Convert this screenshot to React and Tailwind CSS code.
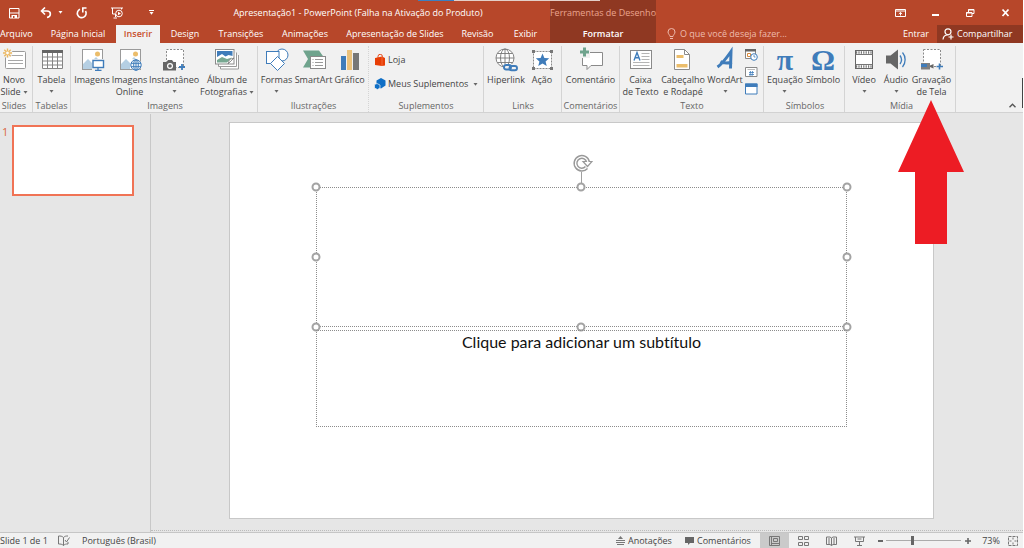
import { useState } from 'react';

const GRAY = '#7f7f7f';
const BLUE = '#3f7cba';

const TABS = [
    { label: 'Arquivo', width: 'w-[40px] justify-start' },
    { label: 'Página Inicial', width: 'w-[76px] justify-center' },
    { label: 'Inserir', width: 'w-[44px] justify-center' },
    { label: 'Design', width: 'w-[50px] justify-center' },
    { label: 'Transições', width: 'w-[62px] justify-center' },
    { label: 'Animações', width: 'w-[66px] justify-center' },
    { label: 'Apresentação de Slides', width: 'w-[114px] justify-center' },
    { label: 'Revisão', width: 'w-[51px] justify-center' },
    { label: 'Exibir', width: 'w-[45px] justify-center' }
];

const HANDLES = [
    'left-0 top-0',
    'left-1/2 top-0',
    'left-full top-0',
    'left-0 top-1/2',
    'left-full top-1/2',
    'left-0 top-full',
    'left-1/2 top-full',
    'left-full top-full'
];

function Icon({ children }) {
    return (
        <svg viewBox="0 0 24 22" className="w-6 h-[22px] shrink-0 overflow-visible" fill="none" aria-hidden="true">
            {children}
        </svg>
    );
}

function Caret({ className = '' }) {
    return (
        <svg viewBox="0 0 5 3" className={`w-[5px] h-[3px] shrink-0 ${className}`} aria-hidden="true">
            <path d="M.5 0h4L2.5 2.8z" fill="currentColor" />
        </svg>
    );
}

/* Ribbon icons */

function NewSlideIcon() {
    return (
        <Icon>
            <rect x="3.5" y="2.5" width="20" height="17" rx="1" fill="#fff" stroke="#9a9a9a" />
            <path d="M9 6.5h12M6 11.5h15M6 14.5h15" stroke="#a8a8a8" />
            <circle cx="5.5" cy="4" r="5" fill="#f1f1f1" />
            <path d="M5.5 -0.5v9M1 4h9M2.3 .8l6.4 6.4M8.7 .8L2.3 7.2" stroke="#ecb860" strokeWidth="1.4" />
            <circle cx="5.5" cy="4" r="1.4" fill="#fff" />
        </Icon>
    );
}

function TableIcon() {
    return (
        <Icon>
            <rect x="2" y="1" width="21" height="19" fill="#fff" />
            <path d="M2 1h21v3H2z" fill="#666" />
            <path d="M2.5 4v15.5h20V4M2.5 8h20M2.5 12h20M2.5 16h20M7.5 4v15.5M12.5 4v15.5M17.5 4v15.5" stroke="#858585" />
        </Icon>
    );
}

function PhotoBase() {
    return (
        <>
            <rect x="2.5" y=".5" width="20" height="20" fill="#fff" stroke="#9a9a9a" />
            <circle cx="17.5" cy="5" r="2.5" fill="#ebbd6b" />
            <path d="M3 20v-5l5-5 4 4v6zM14 10l2-2 3 3z" fill="#b5cfe3" />
        </>
    );
}

function PicturesIcon() {
    return (
        <Icon>
            <PhotoBase />
            <rect x="12" y="10" width="12" height="12" fill="#f1f1f1" />
            <rect x="13" y="11.5" width="10.5" height="7" fill="#fff" stroke={BLUE} strokeWidth="1.4" />
            <path d="M18 19v2M15 21.3h6.5" stroke={BLUE} strokeWidth="1.3" />
        </Icon>
    );
}

function OnlinePicturesIcon() {
    return (
        <Icon>
            <PhotoBase />
            <circle cx="18" cy="16" r="5.8" fill="#f4f8fb" />
            <g stroke={BLUE}>
                <circle cx="18" cy="16" r="5.2" />
                <ellipse cx="18" cy="16" rx="2.3" ry="5.2" />
                <path d="M13 14.3h10M13 17.7h10M18 11v10" />
            </g>
        </Icon>
    );
}

function ScreenshotIcon() {
    return (
        <Icon>
            <rect x="4.5" y=".5" width="17" height="18" fill="#fff" stroke="#8a8a8a" strokeDasharray="2 1.5" />
            <path d="M1 13h3.5l1.500-2h4l1.500 2H14v8.500H1z" fill="#666" />
            <circle cx="8" cy="17" r="3" fill="#fff" />
            <circle cx="8" cy="17" r="1.8" fill="#666" />
            <path d="M20 15v6M17 18h6" stroke={BLUE} strokeWidth="1.8" />
        </Icon>
    );
}

function AlbumIcon() {
    return (
        <Icon>
            <path d="M5.500 16v4h18V6" fill="#fff" stroke="#9a9a9a" />
            <path d="M3.500 14v3.500h18V3.500" fill="#fff" stroke="#9a9a9a" />
            <rect x=".5" y=".5" width="18.5" height="14.5" fill="#fff" stroke="#8a8a8a" />
            <path d="M2 2h15.500v5l-4-1-3 1.500L7 5 2 8z" fill={BLUE} />
            <path d="M2 11l5-3 5 2 5-1.500-5 5H2z" fill="#78a892" />
            <path d="M13 15l1.500-4.500L19 9z" fill="#fff" stroke="#777" strokeWidth=".8" />
        </Icon>
    );
}

function ShapesIcon() {
    return (
        <Icon>
            <circle cx="17" cy="6" r="6" fill="#fff" stroke={BLUE} />
            <rect x="1.5" y="2.5" width="12.5" height="12" fill="#fff" stroke={BLUE} />
            <path d="M12.5 7.5l7 7-7 7-7-7z" fill="#fff" stroke={BLUE} />
        </Icon>
    );
}

function SmartArtIcon() {
    return (
        <Icon>
            <path d="M1 1.500h16l5 7H17l-7 10H1L6 10z" fill="#6fa38d" />
            <rect x="8.5" y="7.5" width="15" height="12" fill="#fff" stroke="#8a8a8a" />
            <path d="M13 10.500h8M13 13.500h8M13 16.500h8M10.500 10.500h1M10.500 13.500h1M10.500 16.500h1" stroke="#999" />
        </Icon>
    );
}

function ChartIcon() {
    return (
        <Icon>
            <path d="M3 7h5v14H3z" fill={BLUE} />
            <path d="M9 1h5v20H9z" fill="#ebc27c" />
            <path d="M15 4h6v17h-6z" fill="#777" />
        </Icon>
    );
}

function LinkIcon() {
    return (
        <Icon>
            <g stroke="#777" strokeWidth=".9">
                <circle cx="11" cy="9" r="9" fill="#fff" />
                <ellipse cx="11" cy="9" rx="4.5" ry="9" />
                <path d="M2 9h18M3.500 4.500h15M3.500 13.500h15M11 0v18" />
            </g>
            <path d="M10 15h14v7H10z" fill="#f1f1f1" />
            <g stroke={BLUE} strokeWidth="1.9">
                <rect x="10" y="16" width="7" height="4.5" rx="2.2" />
                <rect x="15.5" y="17" width="7.5" height="4.3" rx="2.1" />
            </g>
        </Icon>
    );
}

function ActionIcon() {
    return (
        <Icon>
            <rect x="3.5" y="2.5" width="18" height="17" fill="#fff" stroke="#8a8a8a" strokeDasharray="2 1" />
            <path d="M2 1h3v3H2zM20 1h3v3h-3zM2 18h3v3H2zM20 18h3v3h-3z" fill="#777" />
            <path d="M12.500 4.500l1.900 4.400 4.800.4-3.600 3.100 1.100 4.700-4.200-2.500-4.200 2.500 1.100-4.700-3.600-3.100 4.800-.4z" fill={BLUE} />
        </Icon>
    );
}

function CommentIcon() {
    return (
        <Icon>
            <path d="M3.500 3.500h20v13H12l-4 4v-4H3.500z" fill="#fff" stroke="#8a8a8a" />
            <path d="M1 0h10v9H1z" fill="#f1f1f1" />
            <path d="M5.500 -1.500v9M1 3h9" stroke="#6fa38d" strokeWidth="3" />
        </Icon>
    );
}

function TextBoxIcon() {
    return (
        <Icon>
            <rect x="1.5" y="1.5" width="21" height="18" fill="#fff" stroke="#8a8a8a" />
            <path d="M5 11.500l3-8 3 8M6 8.800h4" stroke={BLUE} strokeWidth="1.4" />
            <path d="M12.500 4.500h8M12.500 7.500h8M12.500 10.500h8M4 13.500h16.500M4 16.500h16.500" stroke="#b5b5b5" />
        </Icon>
    );
}

function HeaderFooterIcon() {
    return (
        <Icon>
            <path d="M3.500 .5h10l5 5v15h-15z" fill="#fff" stroke="#8a8a8a" />
            <path d="M13.500 .5v5h5" stroke="#8a8a8a" />
            <path d="M5.500 6h7v3h-7zM5.500 15h11v3.500h-11z" fill="#ebbd6b" />
        </Icon>
    );
}

function WordArtIcon() {
    return (
        <Icon>
            <path d="M4.500 18C9 15 13.500 9 18 2.500L17.500 19.500M7.500 12.500C11 14.500 14.500 14.500 19 13" stroke={BLUE} strokeWidth="3" />
        </Icon>
    );
}

function SymbolIcon({ children }) {
    return (
        <span className="h-[22px] flex items-center justify-center font-['Liberation_Serif',serif] text-[30px] leading-[18px] font-bold text-[#3f7cba]">
            {children}
        </span>
    );
}

function VideoIcon() {
    return (
        <Icon>
            <rect x="3.5" y="1.5" width="17" height="18" fill="#fff" stroke="#666" />
            <path d="M3.500 5.500h17M3.500 15.500h17" stroke="#777" />
            <path d="M4 3.500h16M4 17.500h16" stroke="#777" strokeWidth="2.5" strokeDasharray="1.2 1.2" />
        </Icon>
    );
}

function AudioIcon() {
    return (
        <Icon>
            <path d="M2 6.500h4.500L14 .5v20l-7.500-6H2z" fill="#666" />
            <path d="M16 6.500c1.800 2.500 1.800 6 0 8.500M18.500 3.500c3.500 4 3.500 10.500 0 14.500" stroke={BLUE} strokeWidth="1.3" />
        </Icon>
    );
}

function RecordIcon() {
    return (
        <Icon>
            <rect x="3.5" y=".5" width="17" height="17" fill="#fff" stroke="#8a8a8a" strokeDasharray="2 1.5" />
            <path d="M1 14h9v6.500H1z" fill={GRAY} />
            <path d="M1 15h6v3H1z" fill={BLUE} />
            <path d="M10 16.500l3.500-1.500v4.500L10 18z" fill="#666" />
            <path d="M19.500 14.500v6M16.500 17.500h6.500" stroke={BLUE} strokeWidth="1.6" />
        </Icon>
    );
}

/* Ribbon building blocks */

function RibbonGroup({ label, className = '', children }) {
    return (
        <section className={`flex flex-col justify-between border-r border-[#d4d4d4] shrink-0 ${className}`}>
            <div className="flex">{children}</div>
            <h2 className="text-center text-[9px] leading-[12px] text-[#666] whitespace-nowrap">{label}</h2>
        </section>
    );
}

function RibbonButton({ icon, lines, caret, className = '' }) {
    return (
        <button type="button" className={`flex flex-col items-center shrink-0 text-[#444] ${className}`}>
            {icon}
            <span className="mt-[3px] flex flex-col items-center text-[9px] leading-[12px] whitespace-nowrap">
                {lines.map((line, i) => (
                    <span key={line} className="flex items-center gap-[2px]">
                        {line}
                        {caret && i === 1 && <Caret className="text-[#666]" />}
                    </span>
                ))}
                {caret && lines.length === 1 && <Caret className="mt-1 text-[#666]" />}
            </span>
        </button>
    );
}

function Header({ activeTab, onTabChange }) {
    return (
        <header className="relative flex h-[43px] bg-[#b7472a] text-white text-[9px]">
            <div className="absolute top-0 left-[418px] flex h-px">
                <span className="w-9 bg-[#3c7fc0]" />
                <span className="w-[146px] bg-[#e3cfc8]" />
            </div>

            <div className="w-[550px] shrink-0 flex flex-col">
                <div className="h-[25px] flex items-center">
                    <div className="flex items-center w-[166px] pl-2 shrink-0">
                        <button type="button" aria-label="Salvar">
                            <svg viewBox="0 0 12 12" className="size-3" fill="none">
                                <path d="M1.500 1.500h9.500v9.500H1.500z" stroke="#fff" />
                                <path d="M1.500 6h9.500" stroke="#fff" />
                                <path d="M3.500 8h5.500v3H3.500z" fill="#fff" />
                                <path d="M5 9h1.500v2H5z" fill="#b7472a" />
                            </svg>
                        </button>
                        <button type="button" aria-label="Desfazer" className="ml-5 flex items-center gap-[6px]">
                            <svg viewBox="0 0 12 12" className="size-3" fill="none">
                                <path d="M5 .5L1.500 4 5 7.500M2 4h5c4.500 0 4.500 5.500 0 6.500" stroke="#fff" strokeWidth="1.6" />
                            </svg>
                            <Caret />
                        </button>
                        <button type="button" aria-label="Refazer" className="ml-[13px]">
                            <svg viewBox="0 0 12 12" className="size-3" fill="none">
                                <path d="M4 2.200A4.400 4.400 0 1 0 9.500 4" stroke="#fff" strokeWidth="1.6" />
                                <path d="M6 1h4.500M6.800 1v4.500" stroke="#fff" strokeWidth="1.6" />
                            </svg>
                        </button>
                        <button type="button" aria-label="Iniciar apresentação" className="ml-[23px]">
                            <svg viewBox="0 0 12 12" className="size-3" fill="none" stroke="#fff">
                                <path d="M0 1h12M1.500 1v6H4M10.500 1v1.500M4.500 7v3M2.500 11h3.500" />
                                <circle cx="8" cy="6.500" r="3.3" />
                                <path d="M7 4.800l3 1.700-3 1.700z" fill="#fff" stroke="none" />
                            </svg>
                        </button>
                        <button type="button" aria-label="Personalizar" className="ml-[26px] flex flex-col gap-px">
                            <span className="h-px w-[5px] bg-white" />
                            <Caret />
                        </button>
                    </div>
                    <h1 className="flex-1 text-center whitespace-nowrap">
                        Apresentação1 - PowerPoint (Falha na Ativação do Produto)
                    </h1>
                </div>
                <nav className="h-[18px] flex">
                    {TABS.map(({ label, width }) => (
                        <button
                            key={label}
                            type="button"
                            onClick={() => onTabChange(label)}
                            className={`flex items-center shrink-0 whitespace-nowrap ${width} ${
                                activeTab === label ? 'bg-[#f1f1f1] text-[#c8502e] font-semibold' : ''
                            }`}
                        >
                            {label}
                        </button>
                    ))}
                </nav>
            </div>

            <div className="w-[106px] shrink-0 flex flex-col items-center bg-[#8f3822]">
                <span className="h-[25px] flex items-center text-[#eba58f] whitespace-nowrap">Ferramentas de Desenho</span>
                <button type="button" className="h-[18px] flex items-center font-semibold">
                    Formatar
                </button>
            </div>

            <div className="flex-1 min-w-0 flex flex-col">
                <div className="h-[25px] flex items-center justify-end gap-[24px] pr-3">
                    <button type="button" aria-label="Opções de exibição">
                        <svg viewBox="0 0 11 10" className="w-[11px] h-[10px]" fill="none" stroke="#fff">
                            <path d="M.5 1.500h10v7H.5zM.5 3h10M5.500 7.500V4.500M3.800 6l1.700-1.500L7.200 6" />
                        </svg>
                    </button>
                    <button type="button" aria-label="Minimizar">
                        <svg viewBox="0 0 11 10" className="w-[11px] h-[10px]">
                            <path d="M2 6h7v2H2z" fill="#fff" />
                        </svg>
                    </button>
                    <button type="button" aria-label="Restaurar">
                        <svg viewBox="0 0 11 10" className="w-[11px] h-[10px]" fill="none" stroke="#fff">
                            <path d="M3.500 4V1.500h5.500v4H7M3 2h6" />
                            <path d="M1.500 4.500h5.500v4H1.500zM1 5h6" />
                        </svg>
                    </button>
                    <button type="button" aria-label="Fechar">
                        <svg viewBox="0 0 11 10" className="w-[11px] h-[10px]">
                            <path d="M2.500 1.500l6 6.500M8.500 1.500l-6 6.500" stroke="#fff" strokeWidth="1.8" />
                        </svg>
                    </button>
                </div>
                <div className="h-[18px] flex items-center">
                    <label className="flex-1 min-w-0 flex items-center gap-1 pl-[11px]">
                        <svg viewBox="0 0 9 12" className="w-[9px] h-3 shrink-0" fill="none" stroke="#eebbad">
                            <path d="M3 8.500C3 7 1 6 1 4a3.500 3.500 0 0 1 7 0c0 2-2 3-2 4.500zM3 10.500h3" />
                        </svg>
                        <input
                            type="text"
                            aria-label="Diga-me"
                            placeholder="O que você deseja fazer..."
                            className="w-full min-w-0 bg-transparent outline-none placeholder:text-[#eebbad] placeholder:opacity-100"
                        />
                    </label>
                    <a href="#entrar" className="pr-2">
                        Entrar
                    </a>
                    <button type="button" className="self-stretch w-[86px] flex items-center gap-[3px] pl-[5px] bg-[#8f3822]">
                        <svg viewBox="0 0 12 12" className="size-3 shrink-0" fill="none" stroke="#fff" strokeWidth="1.2">
                            <circle cx="6" cy="3.800" r="3" />
                            <path d="M1 11.500C1.300 8.500 3 7 5.500 7M9 6.500v5M6.500 9h5" />
                        </svg>
                        Compartilhar
                    </button>
                </div>
            </div>
        </header>
    );
}

function Ribbon() {
    return (
        <div className="flex h-[70px] bg-[#f1f1f1] border-b border-[#d2d2d2]">
            <div className="flex pt-[3px]">
                <RibbonGroup label="Slides" className="w-[33px] pt-[3px] pr-[4px]">
                    <RibbonButton icon={<NewSlideIcon />} lines={['Novo', 'Slide']} caret className="w-[28px]" />
                </RibbonGroup>
                <RibbonGroup label="Tabelas" className="w-[38px] pt-[3px]">
                    <RibbonButton icon={<TableIcon />} lines={['Tabela']} caret className="w-[37px]" />
                </RibbonGroup>
                <RibbonGroup label="Imagens" className="w-[187px] pt-[3px] pl-[2px]">
                    <RibbonButton icon={<PicturesIcon />} lines={['Imagens']} className="w-[38px]" />
                    <RibbonButton icon={<OnlinePicturesIcon />} lines={['Imagens', 'Online']} className="w-[37px]" />
                    <RibbonButton icon={<ScreenshotIcon />} lines={['Instantâneo']} caret className="w-[52px]" />
                    <RibbonButton icon={<AlbumIcon />} lines={['Álbum de', 'Fotografias']} caret className="w-[54px]" />
                </RibbonGroup>
                <RibbonGroup label="Ilustrações" className="w-[111px] pt-[3px] pl-px border-dotted">
                    <RibbonButton icon={<ShapesIcon />} lines={['Formas']} caret className="w-[35px]" />
                    <RibbonButton icon={<SmartArtIcon />} lines={['SmartArt']} className="w-[39px]" />
                    <RibbonButton icon={<ChartIcon />} lines={['Gráfico']} className="w-[33px]" />
                </RibbonGroup>
                <RibbonGroup label="Suplementos" className="w-[115px] pt-[7px]">
                    <div className="flex flex-col gap-[10px] pl-[5px] text-[9px] leading-[14px] text-[#444] whitespace-nowrap">
                        <button type="button" className="flex items-center gap-[2px]">
                            <svg viewBox="0 0 12 12" className="size-3" fill="none">
                                <path d="M4 4V2.500a2.200 2.200 0 0 1 4.400 0V4" stroke="#e64a19" />
                                <path d="M1 4l7-1.500L11 4v7.500L8 12 1 11z" fill="#e83e05" />
                                <path d="M8 3v9" stroke="#f6855c" strokeWidth=".6" />
                            </svg>
                            Loja
                        </button>
                        <button type="button" className="flex items-center gap-[2px]">
                            <svg viewBox="0 0 12 12" className="size-3">
                                <path d="M7 0l4.500 2.500v5L7 10.500 2.500 8V2.500z" fill="#0f6fc6" />
                                <path d="M.5 6.500L3 5.500l3 1.500v3l-2.500 1.500L.5 10z" fill="#0f6fc6" stroke="#f1f1f1" strokeWidth=".7" />
                            </svg>
                            Meus Suplementos
                            <Caret className="ml-[3px] text-[#666]" />
                        </button>
                    </div>
                </RibbonGroup>
                <RibbonGroup label="Links" className="w-[78px] pt-[3px] pl-[3px] pr-[2px]">
                    <RibbonButton icon={<LinkIcon />} lines={['Hiperlink']} className="w-[38px]" />
                    <RibbonButton icon={<ActionIcon />} lines={['Ação']} className="w-[34px]" />
                </RibbonGroup>
                <RibbonGroup label="Comentários" className="w-[58px] pt-[3px]">
                    <RibbonButton icon={<CommentIcon />} lines={['Comentário']} className="w-full" />
                </RibbonGroup>
                <RibbonGroup label="Texto" className="w-[144px] pt-[3px] pl-px">
                    <RibbonButton icon={<TextBoxIcon />} lines={['Caixa', 'de Texto']} className="w-[39px]" />
                    <RibbonButton icon={<HeaderFooterIcon />} lines={['Cabeçalho', 'e Rodapé']} className="w-[46px]" />
                    <RibbonButton icon={<WordArtIcon />} lines={['WordArt']} caret className="w-[38px]" />
                    <div className="flex flex-col gap-[5px] pl-px">
                        <button type="button" aria-label="Data e Hora">
                            <svg viewBox="0 0 13 12" className="w-[13px] h-3" fill="none">
                                <path d="M.5 .5h10v9H.5z" fill="#fff" stroke="#888" />
                                <path d="M0 0h11v2.500H0z" fill="#666" />
                                <path d="M2.500 4.500h3v3h-3z" stroke="#d88a3c" />
                                <circle cx="9" cy="8" r="3.3" fill="#fff" stroke={BLUE} />
                                <path d="M9 6v2h1.500" stroke={BLUE} strokeWidth=".8" />
                            </svg>
                        </button>
                        <button type="button" aria-label="Número do Slide">
                            <svg viewBox="0 0 13 12" className="w-[13px] h-3" fill="none">
                                <path d="M.5 1.500h11.500v9H.5z" fill="#fff" stroke="#888" />
                                <path d="M2.500 3.500h7.500" stroke="#bbb" />
                                <path d="M5.500 5l-.5 5M7.500 5L7 10M4 6.500h5M4 8.500h5" stroke={BLUE} strokeWidth=".8" />
                            </svg>
                        </button>
                        <button type="button" aria-label="Objeto">
                            <svg viewBox="0 0 13 12" className="w-[13px] h-3" fill="none">
                                <path d="M.5 1h11.500v10H.5z" fill="#fff" stroke={BLUE} />
                                <path d="M0 .5h12.500v3.500H0z" fill={BLUE} />
                            </svg>
                        </button>
                    </div>
                </RibbonGroup>
                <RibbonGroup label="Símbolos" className="w-[81px] pt-[3px] pl-[2px]">
                    <RibbonButton icon={<SymbolIcon>π</SymbolIcon>} lines={['Equação']} caret className="w-[38px]" />
                    <RibbonButton icon={<SymbolIcon>Ω</SymbolIcon>} lines={['Símbolo']} className="w-[38px]" />
                </RibbonGroup>
                <RibbonGroup label="Mídia" className="w-[111px] pt-[3px] pl-[3px]">
                    <RibbonButton icon={<VideoIcon />} lines={['Vídeo']} caret className="w-[32px]" />
                    <RibbonButton icon={<AudioIcon />} lines={['Áudio']} caret className="w-[32px]" />
                    <RibbonButton icon={<RecordIcon />} lines={['Gravação', 'de Tela']} className="w-[39px]" />
                </RibbonGroup>
            </div>
            <div className="flex-1 flex items-end justify-end gap-[6px] pb-1">
                <button type="button" aria-label="Recolher a Faixa de Opções">
                    <svg viewBox="0 0 7 5" className="w-[7px] h-[5px]" fill="none">
                        <path d="M.5 4.300l3-3 3 3" stroke="#555" strokeWidth="1.400" />
                    </svg>
                </button>
                <span className="w-px h-[30px] bg-[#444]" />
            </div>
        </div>
    );
}

function Slide() {
    return (
        <article className="relative flex-1 aspect-video bg-white border border-[#c8c8c8]">
            <div className="absolute left-[12.3%] top-[16.2%] w-[75.4%] h-[35.4%] border border-dotted border-[#8c8c8c]">
                <span className="absolute left-1/2 bottom-full w-px h-4 bg-[#a0a0a0]" />
                <svg viewBox="0 0 20 18" className="absolute left-1/2 bottom-full mb-4 -ml-2 w-5 h-[18px]" fill="none">
                    <path d="M13.500 13.500A6.300 6.300 0 1 1 15 8" stroke="#999" strokeWidth="4.2" />
                    <path d="M10 7.500h9l-4.500 5z" fill="#fff" stroke="#999" strokeWidth="1.2" />
                    <path d="M13.500 13.500A6.300 6.300 0 1 1 15 8" stroke="#fff" strokeWidth="1.3" />
                </svg>
                <div className="absolute -inset-px">
                    {HANDLES.map((position) => (
                        <span
                            key={position}
                            className={`absolute size-[9px] -translate-x-1/2 -translate-y-1/2 rounded-full border-2 border-[#a3a3a3] bg-white ${position}`}
                        />
                    ))}
                </div>
            </div>
            <div className="absolute left-[12.3%] top-[52.4%] w-[75.4%] h-[24.7%] border border-dotted border-[#8c8c8c] text-center font-['Lato',sans-serif] text-[16px] leading-[22px] text-[#111] [font-variant-ligatures:none]">
                Clique para adicionar um subtítulo
            </div>
        </article>
    );
}

function StatusBar() {
    const [zoom, setZoom] = useState(35);

    return (
        <footer className="flex items-center h-4 bg-[#f1f1f1] border-t border-[#c6c6c6] text-[9px] leading-[12px] text-[#444] whitespace-nowrap">
            <span className="w-[58px]">Slide 1 de 1</span>
            <button type="button" aria-label="Revisão ortográfica" className="w-6">
                <svg viewBox="0 0 12 11" className="w-3 h-[11px]" fill="none" stroke="#777">
                    <path d="M5.500 2.500C4 1 2.500 1 .5 1v8c2 0 3.500 0 5 1.500C7 9 8 9 10 9V7M5.500 2.500v8M5.500 2.500C7 1 8 1 10 1" />
                    <path d="M7 5l1.500 2 3-4.500" />
                </svg>
            </button>
            <button type="button">Português (Brasil)</button>

            <div className="ml-auto flex items-center self-stretch">
                <button type="button" className="flex items-center gap-[3px] w-[69px]">
                    <svg viewBox="0 0 9 9" className="size-[9px]" fill="none" stroke="#777">
                        <path d="M0 4.500h9M0 6.500h9M1 8.500h7" />
                        <path d="M4.500 0L7 3H2z" fill="#777" stroke="none" />
                    </svg>
                    Anotações
                </button>
                <button type="button" className="flex items-center gap-[3px] w-[75px]">
                    <svg viewBox="0 0 9 9" className="size-[9px]">
                        <path d="M0 1h9v6H5L3 9V7H0z" fill="#666" />
                    </svg>
                    Comentários
                </button>
                <button type="button" aria-label="Normal" className="self-stretch w-[29px] flex items-center justify-center bg-[#cacaca]">
                    <svg viewBox="0 0 11 10" className="w-[11px] h-[10px]" fill="none" stroke="#777">
                        <path d="M.5 .5h10v9H.5zM2.500 .5v9M4.500 2.500h4v3h-4zM2.500 7.500h8" />
                    </svg>
                </button>
                <button type="button" aria-label="Classificação de Slides" className="w-[28px] flex justify-center">
                    <svg viewBox="0 0 11 10" className="w-[11px] h-[10px]" fill="none" stroke="#777">
                        <path d="M.5 .5h4v3h-4zM6.500 .5h4v3h-4zM.5 6.500h4v3h-4zM6.500 6.500h4v3h-4z" />
                    </svg>
                </button>
                <button type="button" aria-label="Modo de Leitura" className="w-[28px] flex justify-center">
                    <svg viewBox="0 0 11 10" className="w-[11px] h-[10px]" fill="none" stroke="#777">
                        <path d="M5.500 2L4 1H.5v7.500H4L5.500 9.500 7 8.500h3.500V1H7zM5.500 2v7.500M2 3h2M2 5h2M2 7h2M7 3h2M7 5h2M7 7h2" />
                    </svg>
                </button>
                <button type="button" aria-label="Apresentação de Slides" className="w-[29px] flex justify-center">
                    <svg viewBox="0 0 11 10" className="w-[11px] h-[10px]" fill="none" stroke="#777">
                        <path d="M0 1h11M1.500 1v4.500h8V1M3.500 3h4M5.500 5.500v4M3 9.500h5" />
                    </svg>
                </button>
                <button type="button" aria-label="Reduzir" onClick={() => setZoom(Math.max(0, zoom - 5))} className="w-[12px] flex justify-center">
                    <span className="w-[5px] h-[2px] bg-[#666]" />
                </button>
                <input
                    type="range"
                    aria-label="Zoom"
                    min="0"
                    max="100"
                    value={zoom}
                    onChange={(e) => setZoom(Number(e.target.value))}
                    className="w-[75px] h-[9px] appearance-none bg-transparent [&::-webkit-slider-runnable-track]:h-px [&::-webkit-slider-runnable-track]:bg-[#ababab] [&::-webkit-slider-thumb]:appearance-none [&::-webkit-slider-thumb]:w-[3px] [&::-webkit-slider-thumb]:h-[9px] [&::-webkit-slider-thumb]:-mt-1 [&::-webkit-slider-thumb]:bg-[#666]"
                />
                <button type="button" aria-label="Ampliar" onClick={() => setZoom(Math.min(100, zoom + 5))} className="w-[13px] flex justify-center">
                    <svg viewBox="0 0 6 6" className="size-[6px]">
                        <path d="M3 0v6M0 3h6" stroke="#666" strokeWidth="1.600" />
                    </svg>
                </button>
                <span className="w-[34px] text-center">73%</span>
                <button type="button" aria-label="Ajustar à janela" className="w-[15px]">
                    <svg viewBox="0 0 10 10" className="size-[10px]" fill="none" stroke="#777">
                        <path d="M.5 .5h9v9h-9z" strokeDasharray="3 1" />
                        <path d="M5 1.500v2M5 6.500v2M1.500 5h2M6.500 5h2" />
                    </svg>
                </button>
            </div>
        </footer>
    );
}

function App() {
    const [activeTab, setActiveTab] = useState('Inserir');

    return (
        <div className="relative min-h-screen flex flex-col overflow-hidden bg-[#e6e6e6] border-r border-white font-['Open_Sans','Noto_Sans',sans-serif]">
            <Header activeTab={activeTab} onTabChange={setActiveTab} />
            <Ribbon />

            <div className="flex-1 flex pt-px">
                <aside className="w-[151px] shrink-0 flex items-start gap-[3px] border-r border-[#c8c8c8] pt-[11px] pl-[2px]">
                    <span className="w-[7px] text-[11px] leading-[14px] text-[#d9673f]">1</span>
                    <button
                        type="button"
                        aria-label="Slide 1"
                        className="w-[122px] h-[71px] bg-white border-2 border-[#f07355]"
                    />
                </aside>
                <main className="flex-1 flex flex-col justify-between min-w-0">
                    <div className="flex pt-2 pl-[78px] pr-[89px]">
                        <Slide />
                    </div>
                    <div className="mb-px border-t border-dotted border-[#bcbcbc]" />
                </main>
            </div>

            <StatusBar />

            <svg viewBox="0 0 66 144" className="absolute top-[100px] right-[59px] w-[66px] h-36" aria-hidden="true">
                <path d="M33 0l33 72H49v72H17V72H0z" fill="#ed1c24" />
            </svg>
        </div>
    );
}

export default App;
